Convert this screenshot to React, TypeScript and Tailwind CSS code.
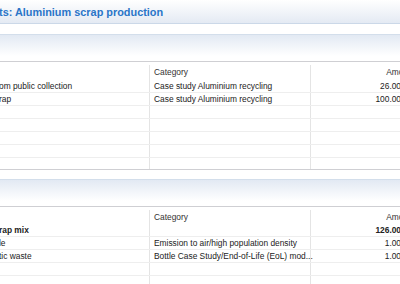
const rows1 = [
  { name: "om public collection", category: "Case study Aluminium recycling", amount: "26.00000" },
  { name: "rap", category: "Case study Aluminium recycling", amount: "100.00000" },
  { name: "", category: "", amount: "" },
  { name: "", category: "", amount: "" },
  { name: "", category: "", amount: "" },
  { name: "", category: "", amount: "" },
  { name: "", category: "", amount: "" },
]

const rows2 = [
  { name: "rap mix", category: "", amount: "126.00000", bold: true },
  { name: "le", category: "Emission to air/high population density", amount: "1.00000" },
  { name: "tic waste", category: "Bottle Case Study/End-of-Life (EoL) mod...", amount: "1.00000" },
  { name: "", category: "", amount: "" },
  { name: "", category: "", amount: "" },
]

type Row = { name: string; category: string; amount: string; bold?: boolean }

function Table({ rows, header, last }: { rows: Row[]; header: string; last?: boolean }) {
  return (
    <div className={"border-t border-[#cfcfd3] " + (last ? "" : "border-b")}>
      <div className={"flex items-center pt-[3px] text-[#333] " + header}>
        <div className="w-[150px] shrink-0 h-full border-r border-[#e4e4e4]" />
        <div className="w-[161px] shrink-0 h-full border-r border-[#e4e4e4] pl-[4px] flex items-center">Category</div>
        <div className="w-[110px] shrink-0 h-full pr-[6px] flex items-center justify-end">Amount</div>
      </div>
      {rows.map((r, i) => (
        <div
          key={i}
          className={
            "flex text-[#222] " +
            (!last && i === rows.length - 1 ? "h-[11px] " : "h-[13px] border-b border-[#eeeeee] ") +
            (r.bold ? "font-bold" : "")
          }
        >
          <div className="w-[150px] shrink-0 h-full border-r border-[#e4e4e4] flex items-center pt-[1px] whitespace-nowrap">
            <span className="-ml-[1px]">{r.name}</span>
          </div>
          <div className="w-[161px] shrink-0 h-full border-r border-[#e4e4e4] pl-[4px] pt-[1px] flex items-center whitespace-nowrap">{r.category}</div>
          <div className="w-[110px] shrink-0 h-full pr-[6px] pt-[1px] flex items-center justify-end">{r.amount}</div>
        </div>
      ))}
    </div>
  )
}

function SectionBand() {
  return <div className="h-[22px] border-t border-[#d3deeb] bg-gradient-to-b from-[#e2e9f3] to-white" />
}

export default function App() {
  return (
    <div className="w-[400px] h-[284px] overflow-hidden bg-white text-[8.4px] leading-none" style={{ fontFamily: '"Liberation Sans", Arial, sans-serif' }}>
      <div className="h-[24px] border-b border-[#cbd8e8] bg-gradient-to-b from-white to-[#e4eaf3] flex items-center">
        <span className="text-[10.9px] font-bold text-[#2a75c8] whitespace-nowrap -ml-[1px] pt-[2px]">ts: Aluminium scrap production</span>
      </div>
      <div className="h-[10px]" />
      <SectionBand />
      <div className="h-[5px]" />
      <Table rows={rows1} header="h-[18px]" />
      <div className="h-[9px]" />
      <SectionBand />
      <div className="h-[5px]" />
      <Table rows={rows2} header="h-[17px]" last />
    </div>
  )
}
